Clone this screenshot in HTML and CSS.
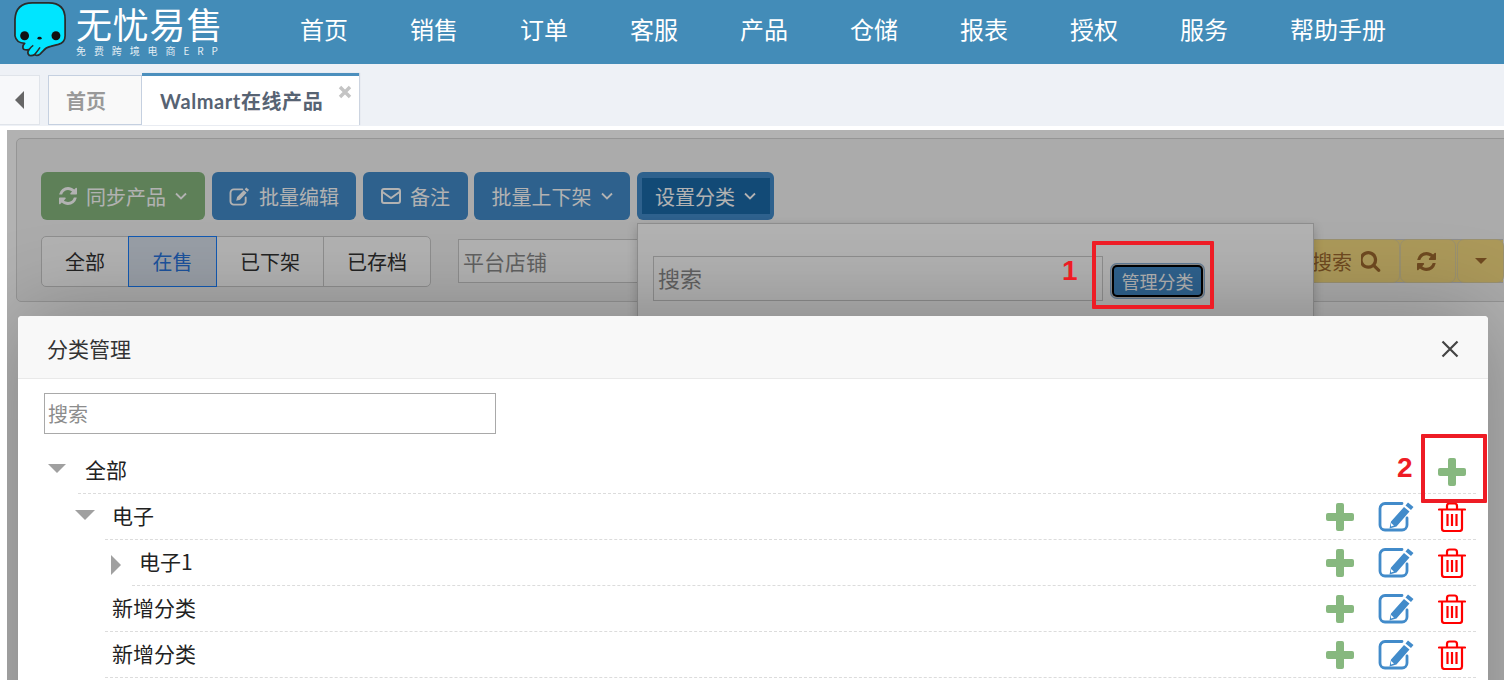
FILE: index.html
```html
<!DOCTYPE html>
<html lang="zh-CN">
<head>
<meta charset="utf-8">
<title>Walmart在线产品</title>
<link rel="stylesheet" href="styles.css">
</head>
<body>
<svg class="defs" width="0" height="0" aria-hidden="true">
  <defs>
    <symbol id="i-refresh" viewBox="0 0 1536 1536"><path fill="currentColor" d="M1511 928q0 5-1 7-64 268-268 434.500t-478 166.500q-146 0-282.500-55t-243.500-157l-129 129q-19 19-45 19t-45-19-19-45v-448q0-26 19-45t45-19h448q26 0 45 19t19 45-19 45l-137 137q71 66 161 102t187 36q134 0 250-65t186-179q11-17 53-117 8-23 30-23h192q13 0 22.500 9.500t9.500 22.500zm25-800v448q0 26-19 45t-45 19h-448q-26 0-45-19t-19-45 19-45l138-138q-148-137-349-137-134 0-250 65t-186 179q-11 17-53 117-8 23-30 23h-199q-13 0-22.500-9.500t-9.500-22.500v-7q65-268 270-434.500t480-166.500q146 0 284 55.500t245 156.500l130-129q19-19 45-19t45 19 19 45z"/></symbol>
    <symbol id="i-chev" viewBox="0 0 12 8"><path fill="none" stroke="currentColor" stroke-width="1.8" d="M1 1.500l5 5 5-5"/></symbol>
    <symbol id="i-plus" viewBox="0 0 28 28"><rect x="10" y="0" width="8" height="28" rx="2" fill="currentColor"/><rect x="0" y="10" width="28" height="8" rx="2" fill="currentColor"/></symbol>
    <symbol id="i-edit" viewBox="0 0 36 30"><path fill="none" stroke="currentColor" stroke-width="2.800" stroke-linecap="round" d="M24 1.500H7a5 5 0 0 0-5 5V23a5 5 0 0 0 5 5h17a5 5 0 0 0 5-5v-7"/><path fill="currentColor" d="M30 0.500l5.500 4.500-2.500 3-5.500-4.500zM26 5l5.500 4.500-13 15-7 2 1.500-7z"/><path fill="#fff" d="M13 21l3 2.500-3 1z"/></symbol>
    <symbol id="i-trash" viewBox="0 0 28 30"><path fill="none" stroke="currentColor" stroke-width="2.200" stroke-linecap="round" stroke-linejoin="round" d="M1 7.500h26M9 7V4q0-2.500 2.500-2.500h5Q19 1.500 19 4v3M4 8v18.500Q4 29 6.500 29h15q2.500 0 2.500-2.500V8"/><path fill="none" stroke="currentColor" stroke-width="2.200" d="M9.500 12v12M14 12v12M18.500 12v12"/></symbol>
  </defs>
</svg>

<header class="topbar">
  <div class="logo">
    <svg class="logo-mark" viewBox="14 0 56 58">
      <path fill="#00e5ff" stroke="#2b2b2b" stroke-width="1.800" stroke-linejoin="round" d="M33 2H50Q67 2 67 19V36Q67 43 60 45L52 47Q47 48 44 52L41 55Q38 57.500 35.500 55.500Q33 57 30 56.500Q27 54 29.500 50.500Q26 51 24 50Q22 47 25 44Q16 43 15 36V19Q16 2 33 2Z"/>
      <path fill="none" stroke="#2b2b2b" stroke-width="1.600" d="M35.500 55.500Q39 51 41 48M29.500 50.500Q32 47 34 46"/>
      <circle cx="25" cy="36" r="4.600" fill="#111"/>
      <circle cx="57.500" cy="36" r="4.600" fill="#111"/>
      <ellipse cx="40.500" cy="38.500" rx="2.200" ry="1.500" fill="#111"/>
    </svg>
    <div class="logo-text">
      <div class="logo-title">无忧易售</div>
      <div class="logo-sub">免费跨境电商ERP</div>
    </div>
  </div>
  <nav class="nav">
    <a class="nav-item">首页</a>
    <a class="nav-item">销售</a>
    <a class="nav-item">订单</a>
    <a class="nav-item">客服</a>
    <a class="nav-item">产品</a>
    <a class="nav-item">仓储</a>
    <a class="nav-item">报表</a>
    <a class="nav-item">授权</a>
    <a class="nav-item">服务</a>
    <a class="nav-item">帮助手册</a>
  </nav>
</header>

<div class="tabbar">
  <div class="tab-back"><span class="tri-left"></span></div>
  <div class="tab">首页</div>
  <div class="tab tab-active">Walmart在线产品
    <svg class="tab-close" viewBox="0 0 14 14"><path fill="none" stroke="currentColor" stroke-width="3.400" d="M2 2l10 10M12 2L2 12"/></svg>
  </div>
</div>

<main class="page">
  <section class="panel">
    <div class="btn-row">
      <button class="btn btn-green"><svg class="ic-refresh"><use href="#i-refresh"/></svg>同步产品<svg class="ic-chev"><use href="#i-chev"/></svg></button>
      <button class="btn btn-blue btn-w144">
        <svg class="ic-note" viewBox="0 0 22 20"><path fill="none" stroke="currentColor" stroke-width="2" stroke-linecap="round" d="M14 2.500H5a3.500 3.500 0 0 0-3.500 3.500v9A3.500 3.500 0 0 0 5 18.500h9a3.500 3.500 0 0 0 3.500-3.500v-4"/><path fill="currentColor" d="M18 0.500l3 2.500-1.500 2-3-2.500zM15.500 3.500l3 2.500-7 7.500-4 1 1-4z"/></svg>批量编辑</button>
      <button class="btn btn-blue btn-w105">
        <svg class="ic-mail" viewBox="0 0 20 16"><rect x="1" y="1" width="18" height="14" rx="2" fill="none" stroke="currentColor" stroke-width="2"/><path fill="none" stroke="currentColor" stroke-width="2" d="M1.500 4L10 10l8.500-6"/></svg>备注</button>
      <button class="btn btn-blue btn-w156">批量上下架<svg class="ic-chev"><use href="#i-chev"/></svg></button>
      <button class="btn btn-blue btn-focus"><span class="btn-inner">设置分类<svg class="ic-chev"><use href="#i-chev"/></svg></span></button>
    </div>
    <div class="filter-row">
      <div class="seg">
        <span class="seg-item seg-a">全部</span>
        <span class="seg-item seg-b seg-active">在售</span>
        <span class="seg-item seg-c">已下架</span>
        <span class="seg-item seg-d">已存档</span>
      </div>
      <input class="shop-input" placeholder="平台店铺">
      <div class="search-group">
        <button class="warn warn-search">搜索<svg class="ic-search" viewBox="0 0 1664 1664"><path fill="currentColor" d="M1024 704q0-185-131.500-316.500t-316.500-131.500-316.500 131.500-131.500 316.500 131.500 316.500 316.500 131.500 316.500-131.500 131.500-316.500zm512 832q0 52-38 90t-90 38q-54 0-90-38l-343-342q-179 124-399 124-143 0-273.500-55.500t-225-150-150-225-55.500-273.500 55.500-273.500 150-225 225-150 273.500-55.500 273.500 55.500 225 150 150 225 55.500 273.500q0 220-124 399l343 343q37 37 37 90z"/></svg></button>
        <button class="warn warn-refresh"><svg class="ic-refresh"><use href="#i-refresh"/></svg></button>
        <button class="warn warn-caret"><span class="tri-down-small"></span></button>
      </div>
    </div>
  </section>

  <div class="dropdown">
    <input class="dropdown-input" placeholder="搜索">
    <button class="manage-btn">管理分类</button>
  </div>

  <div class="overlay">
    <div class="modal">
      <div class="modal-head">
        <span class="modal-title">分类管理</span>
        <svg class="modal-close" viewBox="0 0 18 18"><path fill="none" stroke="#444" stroke-width="2.200" d="M1.500 1.500l15 15M16.500 1.500l-15 15"/></svg>
      </div>
      <div class="modal-body">
        <input class="tree-search" placeholder="搜索">
        <ul class="tree">
          <li class="node lv0">
            <span class="caret"><span class="tri-down"></span></span>
            <div class="node-main"><span class="node-name">全部</span>
              <span class="acts acts-root"><svg class="ic-plus"><use href="#i-plus"/></svg></span></div>
          </li>
          <li class="node lv1">
            <span class="caret"><span class="tri-down"></span></span>
            <div class="node-main"><span class="node-name">电子</span>
              <span class="acts"><svg class="ic-plus"><use href="#i-plus"/></svg><svg class="ic-edit"><use href="#i-edit"/></svg><svg class="ic-trash"><use href="#i-trash"/></svg></span></div>
          </li>
          <li class="node lv2">
            <span class="caret"><span class="tri-right"></span></span>
            <div class="node-main"><span class="node-name">电子1</span>
              <span class="acts"><svg class="ic-plus"><use href="#i-plus"/></svg><svg class="ic-edit"><use href="#i-edit"/></svg><svg class="ic-trash"><use href="#i-trash"/></svg></span></div>
          </li>
          <li class="node lv1">
            <span class="caret"></span>
            <div class="node-main"><span class="node-name">新增分类</span>
              <span class="acts"><svg class="ic-plus"><use href="#i-plus"/></svg><svg class="ic-edit"><use href="#i-edit"/></svg><svg class="ic-trash"><use href="#i-trash"/></svg></span></div>
          </li>
          <li class="node lv1">
            <span class="caret"></span>
            <div class="node-main"><span class="node-name">新增分类</span>
              <span class="acts"><svg class="ic-plus"><use href="#i-plus"/></svg><svg class="ic-edit"><use href="#i-edit"/></svg><svg class="ic-trash"><use href="#i-trash"/></svg></span></div>
          </li>
        </ul>
      </div>
    </div>
    <div class="mark-box mark-box-1"></div>
    <span class="mark-num mark-num-1">1</span>
    <div class="mark-box mark-box-2"></div>
    <span class="mark-num mark-num-2">2</span>
  </div>
</main>
</body>
</html>
```

FILE: styles.css
```css
* { box-sizing: border-box; }
html, body {
  margin: 0;
  height: 680px;
  overflow: hidden;
  background: #fff;
  font-family: "Noto Sans CJK SC", "Open Sans", sans-serif;
}
.defs { position: absolute; }
button, input { font-family: inherit; }

/* top bar */
.topbar {
  height: 64px;
  display: flex;
  background: #438cb8;
  color: #fff;
}
.logo { display: flex; width: 269px; padding: 1px 0 0 14px; }
.logo-mark { width: 54px; height: 56px; flex: none; }
.logo-text { margin-left: 8px; }
.logo-title { font-size: 36px; line-height: 40px; margin-top: 2px; white-space: nowrap; letter-spacing: 0.8px; }
.logo-sub { font-size: 10px; line-height: 12px; margin-top: 2px; letter-spacing: 7.900px; white-space: nowrap; opacity: .85; }
.nav { display: flex; padding-left: 0; }
.nav-item { padding: 0 31px; font-size: 24px; line-height: 58px; white-space: nowrap; }

/* tabs */
.tabbar {
  height: 62px;
  display: flex;
  align-items: flex-end;
  padding-bottom: 1px;
  background: #eef1f6;
}
.tab-back {
  width: 40px;
  height: 50px;
  display: flex;
  align-items: center;
  justify-content: center;
  background: #f7f8fa;
  border: 1px solid #e0e4ea;
  border-left: 0;
}
.tri-left {
  border: solid transparent;
  border-width: 9px 9px 9px 0;
  border-right-color: #666;
}
.tab {
  position: relative;
  width: 94px;
  height: 50px;
  margin-left: 8px;
  padding-left: 17px;
  background: #f9f9f9;
  border: 1px solid #c5d0e0;
  font-family: "Lato", "Noto Sans CJK SC", sans-serif;
  font-weight: 700;
  font-size: 20px;
  line-height: 50px;
  color: #999;
}
.tab-active {
  width: 217px;
  height: 52px;
  margin-left: 0;
  padding-left: 18px;
  border: 0;
  border-top: 3px solid #4c8fbd;
  box-shadow: 1px 0 1px #ccd4e0;
  background: #fff;
  color: #576373;
  line-height: 51px;
  letter-spacing: 0.6px;
}
.tab-close { position: absolute; top: 9px; right: 7px; width: 14px; height: 14px; color: #c4c4c4; }

/* page */
.page {
  position: absolute;
  left: 7px;
  top: 130px;
  right: 0;
  bottom: 0;
  padding: 8px 0 0 9px;
  overflow: hidden;
  background: #fff;
}
.panel {
  height: 164px;
  margin-right: -10px;
  padding: 33px 0 0 24px;
  background: #f5f5f5;
  border: 1px solid #d6d6d6;
  border-radius: 5px;
}
.btn-row { display: flex; gap: 7px; }
.btn {
  height: 48px;
  padding: 0;
  display: flex;
  align-items: center;
  justify-content: center;
  border: 0;
  border-radius: 6px;
  color: #fff;
  font-size: 20px;
  white-space: nowrap;
}
.btn-green { width: 164px; background: #87b87f; }
.btn-blue { background: #428bca; }
.btn-w144 { width: 144px; }
.btn-w105 { width: 105px; margin-right: -1px; }
.btn-w156 { width: 156px; }
.btn-focus { width: 137px; }
.btn-inner {
  width: 128px;
  height: 36px;
  display: flex;
  align-items: center;
  justify-content: center;
  background: #1b6aaa;
}
.ic-refresh { width: 18px; height: 18px; margin-right: 9px; }
.ic-chev { width: 12px; height: 8px; margin-left: 9px; }
.ic-note { width: 21px; height: 19px; margin-right: 9px; }
.ic-mail { width: 20px; height: 16px; margin-right: 9px; }

.filter-row { display: flex; align-items: flex-start; margin-top: 16px; }
.seg {
  display: flex;
  width: 390px;
  height: 51px;
  background: #fff;
  border: 1px solid #ccc;
  border-radius: 5px;
  flex: none;
}
.seg-item {
  display: flex;
  align-items: center;
  justify-content: center;
  font-size: 20px;
  color: #333;
  border-right: 1px solid #ccc;
}
.seg-a { width: 86px; border-right: 0; }
.seg-b { width: 89px; }
.seg-c { width: 107px; }
.seg-d { flex: 1; border-right: 0; }
.seg-active { margin: -1px 0; background: #dae3ee; border: 1px solid #1a80ff; color: #2a76e0; }
.shop-input {
  width: 400px;
  height: 44px;
  margin: 3px 0 0 27px;
  padding: 0 4px;
  border: 1px solid #ccc;
  background: #fff;
  font-size: 21px;
}
.shop-input::placeholder, .dropdown-input::placeholder, .tree-search::placeholder { color: #8c8c8c; opacity: 1; }
.search-group { display: flex; margin: 3px 10px 0 auto; height: 44px; background: #f7dc81; border: 1px solid #ccc; border-width: 1px 0; gap: 2px; }
.warn {
  height: 100%;
  display: flex;
  align-items: center;
  justify-content: center;
  padding: 0;
  border: 0;
  border-radius: 6px;
  background: #f7dc81;
  color: #9f6a2e;
  font-size: 20px;
  outline: 1px solid #ddd0a0;
}
.warn-search { width: 100px; justify-content: flex-end; padding-right: 17px; }
.warn-refresh { width: 54px; }
.warn-refresh .ic-refresh { margin: 0 3px 0 0; width: 19px; height: 19px; }
.warn-caret { width: 45px; margin-left: 1px; }
.ic-search { width: 21px; height: 21px; margin-left: 9px; }
.tri-down-small { border: solid transparent; border-width: 6px 6px 0; border-top-color: #9f6a2e; }

/* dropdown */
.dropdown {
  position: absolute;
  left: 630px;
  top: 93px;
  width: 677px;
  height: 300px;
  display: flex;
  align-items: flex-start;
  padding: 32px 0 0 15px;
  background: #fff;
  border: 1px solid #ccc;
  box-shadow: 0 4px 10px rgba(0, 0, 0, .2);
}
.dropdown-input {
  width: 450px;
  height: 45px;
  padding: 0 4px 4px;
  border: 1px solid #ccc;
  background: #fff;
  font-size: 22px;
}
.manage-btn {
  width: 87px;
  height: 28px;
  margin: 11px 0 0 11px;
  padding: 0;
  border: 0;
  border-radius: 3px;
  background: #428bca;
  color: #fff;
  font-size: 18px;
  line-height: 28px;
  white-space: nowrap;
  box-shadow: 0 0 0 2px #000, 0 0 0 3px #c8c8c8, 0 0 0 4px #88b0d8;
}

/* overlay & modal */
.overlay {
  position: absolute;
  inset: 0;
  padding: 186px 0 0 11px;
  overflow: hidden;
  background: rgba(0, 0, 0, .3);
}
.modal {
  width: 1470px;
  height: 520px;
  background: #fff;
  border-radius: 4px;
  box-shadow: 0 0 90px rgba(0, 0, 0, .28);
}
.modal-head {
  height: 63px;
  padding: 2px 29px 0;
  display: flex;
  align-items: center;
  justify-content: space-between;
  background: #f8f8f8;
  border-bottom: 1px solid #e9e9e9;
  border-radius: 4px 4px 0 0;
}
.modal-title { font-size: 21px; color: #333; }
.modal-close { width: 18px; height: 18px; margin-top: 2px; }
.modal-body { padding: 14px 12px 0 26px; }
.tree-search {
  display: block;
  width: 452px;
  height: 41px;
  padding: 0 3px;
  border: 1px solid #a9a9a9;
  background: #fff;
  font-size: 20px;
}
.tree { list-style: none; margin: 14px 0 0; padding: 0; }
.node { display: flex; height: 46px; }
.lv1 { margin-left: 27px; }
.lv2 { margin-left: 54px; }
.caret { width: 34px; flex: none; padding-top: 16px; padding-left: 4px; display: block; }
.tri-down {
  display: block;
  width: 0;
  border: solid transparent;
  border-width: 10px 10px 0;
  border-top-color: #a0a0a0;
}
.lv0 .tri-down { border-width: 9px 9.500px 0; }
.tri-right {
  display: block;
  width: 0;
  margin: -1px 0 0 9px;
  border: solid transparent;
  border-width: 10px 0 10px 10px;
  border-left-color: #a0a0a0;
}
.node-main {
  position: relative;
  flex: 1;
  display: flex;
  align-items: center;
  justify-content: space-between;
  padding-left: 7px;
  border-bottom: 1px dashed #dcdcdc;
}
.node-name { font-size: 21px; color: #222; margin-bottom: 4px; }
.acts { display: flex; align-items: center; margin-right: 10px; padding-top: 1px; }
.acts-root { padding-top: 3px; }
.ic-plus { width: 28px; height: 28px; color: #87b87f; }
.ic-edit { width: 36px; height: 30px; margin-left: 24px; color: #428bca; }
.ic-trash { width: 28px; height: 30px; margin-left: 24px; color: #f00; }

/* annotations */
.mark-box { position: absolute; border: 4px solid #ee1c25; border-radius: 1px; }
.mark-box-1 { left: 1085px; top: 111px; width: 122px; height: 68px; }
.mark-box-2 { left: 1414px; top: 304px; width: 66px; height: 69px; }
.mark-num { position: absolute; color: #ee1c25; font-family: "Liberation Sans", sans-serif; font-weight: 700; font-size: 28px; line-height: 30px; }
.mark-num-1 { left: 1055px; top: 126px; }
.mark-num-2 { left: 1390px; top: 323px; }
```
